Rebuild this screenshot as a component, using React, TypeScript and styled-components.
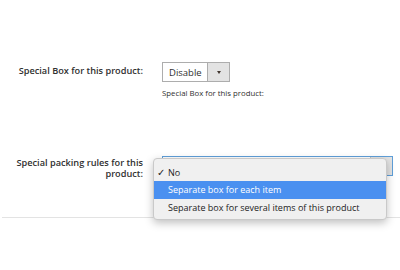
import styled, { createGlobalStyle } from "styled-components";

const GlobalStyle = createGlobalStyle`
  body {
    margin: 0;
    background: #fff;
    font-family: "Open Sans", "Liberation Sans", sans-serif;
    color: #303030;
  }
`;

const Page = styled.div`
  width: 400px;
  height: 270px;
  overflow: hidden;
`;

const Fieldset = styled.div`
  display: flex;
  flex-direction: column;
  gap: 58px;
  padding: 62px 7px 38px 0;
  margin-left: 2px;
  border-bottom: 1px solid #e3e3e3;
`;

const Field = styled.div`
  display: grid;
  grid-template-columns: 148px 1fr;
  column-gap: 12px;
  align-items: start;
`;

const Label = styled.label<{ $top: number }>`
  font-size: 9.2px;
  font-weight: 600;
  line-height: 10.5px;
  text-align: right;
  white-space: nowrap;
  padding: ${(p) => p.$top}px 7px 0 0;
`;

const Control = styled.div`
  position: relative;
  display: flex;
  flex-direction: column;
  align-items: flex-start;
`;

const Select = styled.div<{ $width: number; $focus?: boolean }>`
  display: flex;
  width: ${(p) => p.$width}px;
  height: 20px;
  box-sizing: border-box;
  border: 1px solid ${(p) => (p.$focus ? "#5f9fd9" : "#adadad")};
  background: #fff;
  font-size: 9.5px;
`;

const Value = styled.div`
  flex: 1;
  display: flex;
  align-items: center;
  padding-left: 6px;
`;

const Arrow = styled.div<{ $focus?: boolean }>`
  width: 21px;
  display: flex;
  align-items: center;
  justify-content: center;
  background: #e3e3e3;
  border-left: 1px solid ${(p) => (p.$focus ? "#c4c4c4" : "#adadad")};

  &::after {
    content: "";
    border-left: 2.5px solid transparent;
    border-right: 2.5px solid transparent;
    border-top: 3px solid #41362f;
  }
`;

const Note = styled.div`
  margin-top: 6px;
  font-size: 7.8px;
  color: #303030;
`;

const Popup = styled.ul`
  position: absolute;
  top: 2px;
  left: -9px;
  width: 232px;
  margin: 0;
  padding: 5px 0 3px;
  list-style: none;
  background: #f0f0f0;
  border: 1px solid #c9c9c9;
  border-radius: 4px;
  box-shadow: 0 3px 8px rgba(0, 0, 0, 0.25);
  font-size: 9px;
  color: #222;
`;

const Option = styled.li<{ $active?: boolean }>`
  position: relative;
  height: 17.3px;
  line-height: 17.3px;
  padding-left: 14px;
  background: ${(p) => (p.$active ? "#4a90f0" : "transparent")};
  color: ${(p) => (p.$active ? "#fff" : "#222")};
`;

const Check = styled.span`
  position: absolute;
  left: 3px;
  top: 0;
  font-size: 10px;
`;

export default function App() {
  return (
    <Page>
      <GlobalStyle />
      <Fieldset>
        <Field>
          <Label $top={4}>Special Box for this product:</Label>
          <Control>
            <Select $width={68}>
              <Value>Disable</Value>
              <Arrow />
            </Select>
            <Note>Special Box for this product:</Note>
          </Control>
        </Field>
        <Field>
          <Label $top={2}>
            Special packing rules for this
            <br />
            product:
          </Label>
          <Control>
            <Select $width={231} $focus>
              <Value />
              <Arrow $focus />
            </Select>
            <Popup>
              <Option>
                <Check>✓</Check>No
              </Option>
              <Option $active>Separate box for each item</Option>
              <Option>Separate box for several items of this product</Option>
            </Popup>
          </Control>
        </Field>
      </Fieldset>
    </Page>
  );
}
